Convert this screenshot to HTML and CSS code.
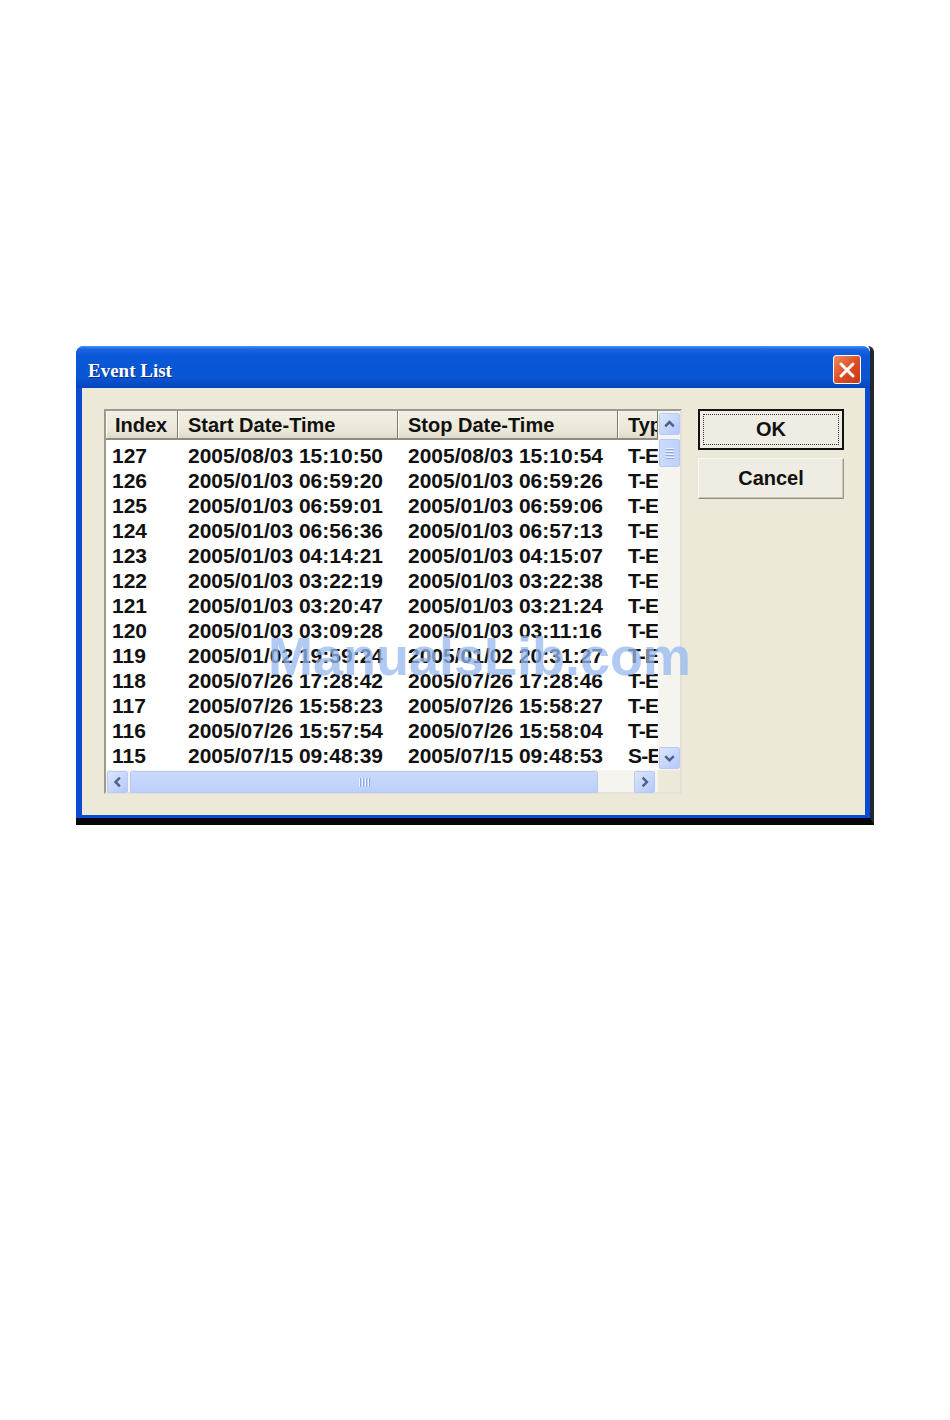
FILE: index.html
```html
<!DOCTYPE html>
<html lang="en">

<head>
  <meta charset="UTF-8" />
  <meta name="viewport" content="width=device-width, initial-scale=1.0" />
  <title>Event List</title>
  <link rel="stylesheet" href="styles.css">
</head>

<body>
  <div class="frame">
    <div class="window">
      <div class="titlebar">
        <span class="title">Event List</span>
        <span class="close">
          <svg width="20" height="20" viewBox="0 0 20 20">
            <path d="M4 4 L16 16 M16 4 L4 16" stroke="#fff" stroke-width="3" stroke-linecap="round" />
          </svg>
        </span>
      </div>

      <div class="client">
        <div class="listview">
          <div class="lv-main">
            <div class="lv-header">
              <div class="hcell c-index">Index</div>
              <div class="hcell c-start">Start Date-Time</div>
              <div class="hcell c-stop">Stop Date-Time</div>
              <div class="hcell c-type">Type</div>
            </div>
            <div class="lv-rows">
              <div class="row"><span class="c-index">127</span><span class="c-start">2005/08/03 15:10:50</span><span class="c-stop">2005/08/03 15:10:54</span><span class="c-type">T-E</span></div>
              <div class="row"><span class="c-index">126</span><span class="c-start">2005/01/03 06:59:20</span><span class="c-stop">2005/01/03 06:59:26</span><span class="c-type">T-E</span></div>
              <div class="row"><span class="c-index">125</span><span class="c-start">2005/01/03 06:59:01</span><span class="c-stop">2005/01/03 06:59:06</span><span class="c-type">T-E</span></div>
              <div class="row"><span class="c-index">124</span><span class="c-start">2005/01/03 06:56:36</span><span class="c-stop">2005/01/03 06:57:13</span><span class="c-type">T-E</span></div>
              <div class="row"><span class="c-index">123</span><span class="c-start">2005/01/03 04:14:21</span><span class="c-stop">2005/01/03 04:15:07</span><span class="c-type">T-E</span></div>
              <div class="row"><span class="c-index">122</span><span class="c-start">2005/01/03 03:22:19</span><span class="c-stop">2005/01/03 03:22:38</span><span class="c-type">T-E</span></div>
              <div class="row"><span class="c-index">121</span><span class="c-start">2005/01/03 03:20:47</span><span class="c-stop">2005/01/03 03:21:24</span><span class="c-type">T-E</span></div>
              <div class="row"><span class="c-index">120</span><span class="c-start">2005/01/03 03:09:28</span><span class="c-stop">2005/01/03 03:11:16</span><span class="c-type">T-E</span></div>
              <div class="row"><span class="c-index">119</span><span class="c-start">2005/01/02 19:59:24</span><span class="c-stop">2005/01/02 20:31:27</span><span class="c-type">T-E</span></div>
              <div class="row"><span class="c-index">118</span><span class="c-start">2005/07/26 17:28:42</span><span class="c-stop">2005/07/26 17:28:46</span><span class="c-type">T-E</span></div>
              <div class="row"><span class="c-index">117</span><span class="c-start">2005/07/26 15:58:23</span><span class="c-stop">2005/07/26 15:58:27</span><span class="c-type">T-E</span></div>
              <div class="row"><span class="c-index">116</span><span class="c-start">2005/07/26 15:57:54</span><span class="c-stop">2005/07/26 15:58:04</span><span class="c-type">T-E</span></div>
              <div class="row"><span class="c-index">115</span><span class="c-start">2005/07/15 09:48:39</span><span class="c-stop">2005/07/15 09:48:53</span><span class="c-type">S-E</span></div>
            </div>
          </div>

          <div class="vscroll">
            <span class="sb-btn">
              <svg width="20" height="20" viewBox="0 0 20 20"><polyline points="5.5,12.5 10,8 14.5,12.5" fill="none" stroke="#4d6185" stroke-width="2.6" /></svg>
            </span>
            <div class="v-track">
              <span class="v-thumb"><i></i><i></i><i></i><i></i></span>
            </div>
            <span class="sb-btn">
              <svg width="20" height="20" viewBox="0 0 20 20"><polyline points="5.5,8 10,12.5 14.5,8" fill="none" stroke="#4d6185" stroke-width="2.6" /></svg>
            </span>
          </div>

          <div class="hscroll">
            <span class="sb-btn">
              <svg width="20" height="20" viewBox="0 0 20 20"><polyline points="12.5,5.5 8,10 12.5,14.5" fill="none" stroke="#4d6185" stroke-width="2.6" /></svg>
            </span>
            <span class="h-thumb"><i></i><i></i><i></i><i></i></span>
            <span class="h-track"></span>
            <span class="sb-btn">
              <svg width="20" height="20" viewBox="0 0 20 20"><polyline points="8,5.5 12.5,10 8,14.5" fill="none" stroke="#4d6185" stroke-width="2.6" /></svg>
            </span>
          </div>
          <div class="corner"></div>
        </div>

        <div class="buttons">
          <button class="btn default"><span class="focus">OK</span></button>
          <button class="btn">Cancel</button>
        </div>

        <div class="watermark">ManualsLib.com</div>
      </div>
    </div>
  </div>
</body>

</html>
```

FILE: styles.css
```css
body {
  margin: 0;
  padding: 346px 0 0 76px;
  background-color: #fff;
  font-family: "Liberation Sans", Arial, sans-serif;
}

/* dark desktop edge showing right / below the dialog */
.frame {
  width: 794px;
  border-right: 4px solid #23252f;
  border-bottom: 7px solid #05060c;
  border-top-right-radius: 6px;
}

.window {
  padding-bottom: 3px;
  border-radius: 8px 8px 0 0;
  background-color: #0a4bd0;
}

/* title bar */
.titlebar {
  display: flex;
  justify-content: space-between;
  align-items: flex-start;
  height: 42px;
  padding: 9px 9px 0 12px;
  box-sizing: border-box;
  border-radius: 8px 8px 0 0;
  background: linear-gradient(#4a95f6 0, #1a66e4 3px, #0a58d8 10px, #0955d2 32px, #0644bd 42px);
}

.titlebar .title {
  margin-top: 5px;
  font-family: "Liberation Serif", "Times New Roman", serif;
  font-weight: bold;
  font-size: 19px;
  color: #fff;
  text-shadow: 1px 1px 0 #0a2c8a;
}

.titlebar .close {
  display: flex;
  align-items: center;
  justify-content: center;
  width: 28px;
  height: 29px;
  box-sizing: border-box;
  border: 1px solid #fff;
  border-radius: 3px;
  background: linear-gradient(135deg, #f08a63, #dd4a22 55%, #c23a16);
}

/* client area */
.client {
  position: relative;
  display: flex;
  gap: 16px;
  height: 427px;
  margin: 0 5px 0 6px;
  padding: 21px 21px 0 22px;
  box-sizing: border-box;
  background-color: #ece9d8;
}

.listview {
  display: grid;
  grid-template-columns: 552px 22px;
  grid-template-rows: 359px 22px;
  width: 578px;
  height: 385px;
  box-sizing: border-box;
  border: 2px solid #9c9a8f;
  border-right-color: #e4e2d8;
  border-bottom-color: #e4e2d8;
  background-color: #fff;
}

.lv-main {
  overflow: hidden;
  font-weight: bold;
  font-size: 21px;
  color: #111;
}

.lv-header {
  display: flex;
  height: 29px;
  box-sizing: border-box;
  border-bottom: 2px solid #8f8c7e;
  background: linear-gradient(#f2f0e6, #ebe8d8 70%, #dedacb);
  font-size: 20px;
}

.hcell {
  flex: none;
  height: 27px;
  line-height: 29px;
  padding-left: 10px;
  box-sizing: border-box;
  overflow: hidden;
  white-space: nowrap;
  border-right: 1px solid #7b7969;
  box-shadow: inset 1px 0 0 #fff;
}

.hcell.c-index {
  padding-left: 9px;
}

.c-index {
  width: 72px;
}

.c-start,
.c-stop {
  width: 220px;
}

.c-type {
  width: 40px;
}

.lv-rows {
  padding-top: 3px;
}

.row {
  display: flex;
  height: 25px;
  line-height: 25px;
  white-space: nowrap;
}

.row span {
  flex: none;
  overflow: hidden;
  padding-left: 10px;
  box-sizing: border-box;
}

.row .c-index {
  padding-left: 6px;
}

.row .c-type {
  letter-spacing: -0.8px;
}

/* scrollbars */
.sb-btn {
  display: flex;
  align-items: center;
  justify-content: center;
  flex: none;
  width: 21px;
  height: 22px;
  box-sizing: border-box;
  border: 1px solid #b9cbf4;
  border-radius: 2px;
  background: linear-gradient(135deg, #dce6fd, #c3d4fc 60%, #b3c7f7);
}

.vscroll {
  display: flex;
  flex-direction: column;
  padding: 2px 0 1px 1px;
  background-color: #f5f4ef;
}

.v-track {
  flex: 1;
  padding-top: 4px;
}

.v-thumb,
.h-thumb {
  display: flex;
  align-items: center;
  justify-content: center;
  gap: 2px;
  box-sizing: border-box;
  border: 1px solid #b6c9f4;
  border-radius: 2px;
  background: linear-gradient(90deg, #cbdafc, #bfd1fb);
}

.v-thumb {
  flex-direction: column;
  width: 21px;
  height: 28px;
}

.v-thumb i {
  display: block;
  width: 8px;
  height: 1px;
  background-color: #eef3fe;
  box-shadow: 0 1px 0 #8ca6e0;
}

.hscroll {
  display: flex;
  gap: 2px;
  padding: 1px 3px 0 1px;
  background-color: #f5f4ef;
}

.h-thumb {
  width: 468px;
  height: 22px;
  background: linear-gradient(#cbdafc, #bcd0fb);
}

.h-thumb i {
  display: block;
  width: 1px;
  height: 9px;
  background-color: #eef3fe;
  box-shadow: 1px 0 0 #8ca6e0;
}

.h-track {
  flex: 1;
}

.corner {
  background-color: #ece9d8;
}

/* buttons */
.buttons {
  display: flex;
  flex-direction: column;
  gap: 8px;
}

.btn {
  width: 146px;
  height: 41px;
  padding: 0;
  box-sizing: border-box;
  border: 1px solid #f8f7f2;
  border-right-color: #9d9b8f;
  border-bottom-color: #8f8d81;
  box-shadow: inset -1px -1px 0 #c9c6b8;
  background-color: #efede3;
  font-family: "Liberation Sans", Arial, sans-serif;
  font-weight: bold;
  font-size: 20px;
  color: #111;
}

.btn.default {
  border: 2px solid #111;
  padding: 3px;
  box-shadow: none;
}

.btn .focus {
  display: block;
  height: 100%;
  line-height: 29px;
  border: 1px dotted #333;
  box-sizing: border-box;
}

/* scan watermark */
.watermark {
  position: absolute;
  left: 186px;
  top: 241px;
  font-family: "Liberation Sans", Arial, sans-serif;
  font-weight: bold;
  font-size: 54px;
  line-height: 1;
  color: rgba(150, 184, 240, 0.75);
  pointer-events: none;
}
```
